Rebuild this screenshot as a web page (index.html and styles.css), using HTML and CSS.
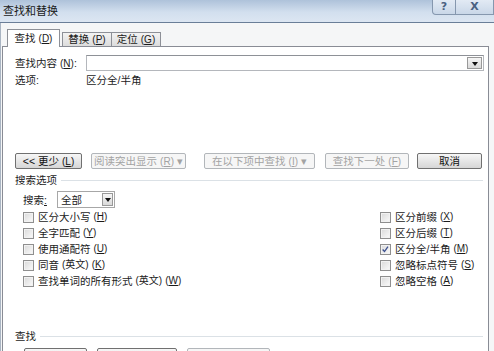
FILE: index.html
```html
<!DOCTYPE html>
<html lang="zh-CN">
<head>
    <meta charset="UTF-8">
    <meta name="viewport" content="width=device-width, initial-scale=1.0">
    <title>查找和替换</title>
    <link rel="stylesheet" href="styles.css">
</head>
<body>
<div id="dialog">
    <div class="titlebar">
        <span class="title">查找和替换</span>
        <div class="caption">
            <a class="cap help">?</a><a class="cap close">X</a>
        </div>
    </div>
    <div class="client">
        <nav class="tabs">
            <a class="tab active">查找<span class="key">(<u>D</u>)</span></a>
            <a class="tab">替换<span class="key">(<u>P</u>)</span></a>
            <a class="tab">定位<span class="key">(<u>G</u>)</span></a>
        </nav>
        <div class="panel">
            <div class="row">
                <span class="label">查找内容<span class="key">(<u>N</u>)</span>:</span>
                <div class="combo"><span class="drop"></span></div>
            </div>
            <div class="row opts">
                <span class="label">选项:</span><span>区分全/半角</span>
            </div>
            <div class="buttons">
                <a class="btn on less">&lt;&lt; 更少<span class="key">(<u>L</u>)</span></a>
                <a class="btn read">阅读突出显示<span class="key">(<u>R</u>)</span> ▾</a>
                <a class="btn within">在以下项中查找<span class="key">(<u>I</u>)</span> ▾</a>
                <a class="btn next">查找下一处<span class="key">(<u>F</u>)</span></a>
                <a class="btn on cancel">取消</a>
            </div>
            <div class="group">搜索选项</div>
            <div class="row search">
                <span class="search-label">搜索<u>:</u></span>
                <div class="select"><span>全部</span><span class="drop small"></span></div>
            </div>
            <div class="checks">
                <ul class="col">
                    <li><span class="box"></span>区分大小写<span class="key">(<u>H</u>)</span></li>
                    <li><span class="box"></span>全字匹配<span class="key">(<u>Y</u>)</span></li>
                    <li><span class="box"></span>使用通配符<span class="key">(<u>U</u>)</span></li>
                    <li><span class="box"></span>同音<span class="key">(英文)</span><span class="key">(<u>K</u>)</span></li>
                    <li><span class="box"></span>查找单词的所有形式<span class="key">(英文)</span><span class="key">(<u>W</u>)</span></li>
                </ul>
                <ul class="col">
                    <li><span class="box"></span>区分前缀<span class="key">(<u>X</u>)</span></li>
                    <li><span class="box"></span>区分后缀<span class="key">(<u>T</u>)</span></li>
                    <li><span class="box"><svg viewBox="0 0 11 11" width="9" height="9"><path d="M2 5.5 L4.3 8 L8.5 2" fill="none" stroke="#3b4f8e" stroke-width="1.6"/></svg></span>区分全/半角<span class="key">(<u>M</u>)</span></li>
                    <li><span class="box"></span>忽略标点符号<span class="key">(<u>S</u>)</span></li>
                    <li><span class="box"></span>忽略空格<span class="key">(<u>A</u>)</span></li>
                </ul>
            </div>
            <div class="group find">查找</div>
            <div class="buttons bottom">
                <a class="btn on fmt"></a>
                <a class="btn on special"></a>
                <a class="btn plain"></a>
            </div>
        </div>
    </div>
</div>
</body>
</html>
```

FILE: styles.css
```css
* {
    box-sizing: border-box;
}

body {
    margin: 0;
    width: 494px;
    height: 351px;
    overflow: hidden;
    background: #f0f0f0;
    font: 10.5px/16px "Liberation Sans", "Noto Sans CJK SC", sans-serif;
    color: #1b1b1b;
}

u {
    text-decoration: underline;
    text-underline-offset: 1px;
}

.key {
    margin-left: 3px;
    font-size: 10px;
}

#dialog {
    display: flex;
    flex-direction: column;
    height: 100%;
}

/* 标题栏 */
.titlebar {
    display: flex;
    flex: none;
    height: 23px;
    background: linear-gradient(#aec2da, #d2dfee 55%, #dce6f2);
    border-bottom: 1px solid #6a7e98;
}

.title {
    padding: 3px 0 0 3px;
    font-size: 11px;
    color: #1a1a1a;
}

.caption {
    margin-left: auto;
    display: flex;
    align-items: flex-start;
}

.cap {
    height: 15px;
    text-align: center;
    font: bold 11px/14px "DejaVu Sans", sans-serif;
    color: #4a6182;
    background: linear-gradient(#e2eaf4, #c9d7e8);
    border: 1px solid #8597ae;
    border-top: 0;
}

.help {
    width: 24px;
    border-radius: 0 0 0 4px;
}

.close {
    width: 38px;
    border-left: 0;
}

/* 主体 */
.client {
    flex: 1;
    display: flex;
    flex-direction: column;
    padding: 0 5px 0 1px;
    border-left: 1px solid #a9b4c2;
    background: #f5f6f7;
}

.tabs {
    display: flex;
    flex: none;
    height: 18px;
    margin-top: 6px;
    padding-left: 5px;
}

.tab {
    width: 50px;
    height: 14px;
    margin-top: 3px;
    border: 1px solid #8d9097;
    border-bottom: 0;
    background: linear-gradient(#f3f3f3, #dcdcdc);
    text-align: center;
    line-height: 13px;
}

.tab:nth-child(2) {
    margin-left: 2px;
}

.tab:nth-child(3) {
    margin-left: -1px;
}

.tab.active {
    position: relative;
    z-index: 1;
    width: 53px;
    height: 18px;
    margin-top: 0;
    background: #fff;
    line-height: 17px;
}

.panel {
    flex: 1;
    margin-top: -1px;
    border: 1px solid #898c95;
    background: #fff;
    padding: 8px 4px 0 12px;
}

.row {
    display: flex;
    align-items: center;
    height: 16px;
}

.label {
    flex: none;
    width: 71px;
}

.combo {
    flex: 1;
    height: 16px;
    display: flex;
    align-items: center;
    justify-content: flex-end;
    padding-right: 1px;
    border: 1px solid #b4b7bc;
    border-top-color: #8e9197;
}

.drop {
    width: 15px;
    height: 12px;
    border: 1px solid #999;
    background: linear-gradient(#f6f6f6, #d9d9d9);
    display: flex;
    align-items: center;
    justify-content: center;
}

.drop::after {
    content: "";
    border-left: 3px solid transparent;
    border-right: 3px solid transparent;
    border-top: 4px solid #111;
    margin-top: 1px;
}

.drop.small {
    width: 11px;
    height: 13px;
}

.opts {
    margin-top: 1px;
}

/* 按钮 */
.buttons {
    display: flex;
    height: 16px;
    margin-top: 65px;
}

.btn {
    height: 16px;
    border: 1px solid #b2b6ba;
    border-radius: 2px;
    background: #f6f6f6;
    color: #a3a3a3;
    text-align: center;
    line-height: 14px;
    white-space: nowrap;
}

.btn.on {
    border-color: #707070;
    background: linear-gradient(#f7f7f7, #e6e6e6 50%, #d6d6d6);
    color: #111;
}

.less { width: 67px; }
.read { width: 95px; margin-left: 9px; }
.within { width: 111px; margin-left: 18px; }
.next { width: 84px; margin-left: 10px; }
.cancel { width: 65px; margin-left: 8px; }

.group {
    display: flex;
    align-items: center;
    gap: 4px;
    height: 16px;
    margin-top: 3px;
    padding-right: 1px;
}

.group::after {
    content: "";
    flex: 1;
    height: 1px;
    background: #dbe1e6;
}

.search {
    height: 17px;
    margin-top: 3px;
    padding-left: 8px;
}

.search-label {
    width: 34px;
}

.select {
    width: 58px;
    height: 17px;
    display: flex;
    align-items: center;
    justify-content: space-between;
    padding: 0 1px 0 3px;
    border: 1px solid #a7a7a7;
}

/* 复选框 */
.checks {
    display: flex;
    margin-top: 1px;
    padding-left: 8px;
}

.col {
    margin: 0;
    padding: 0;
    list-style: none;
}

.col:first-child {
    width: 357px;
}

.col li {
    display: flex;
    align-items: center;
    height: 16px;
    white-space: nowrap;
}

.box {
    width: 11px;
    height: 11px;
    flex: none;
    display: flex;
    align-items: center;
    justify-content: center;
    margin-right: 4px;
    border: 1px solid #8f8f8f;
    background: linear-gradient(135deg, #d9d9d9, #fbfbfb);
    box-shadow: inset 0 0 0 1px #f2f2f2;
}

.find {
    margin-top: 39px;
}

.bottom {
    margin-top: 4px;
}

.fmt { width: 63px; margin-left: 9px; }
.special { width: 80px; margin-left: 10px; }
.plain { width: 83px; margin-left: 10px; }
```
